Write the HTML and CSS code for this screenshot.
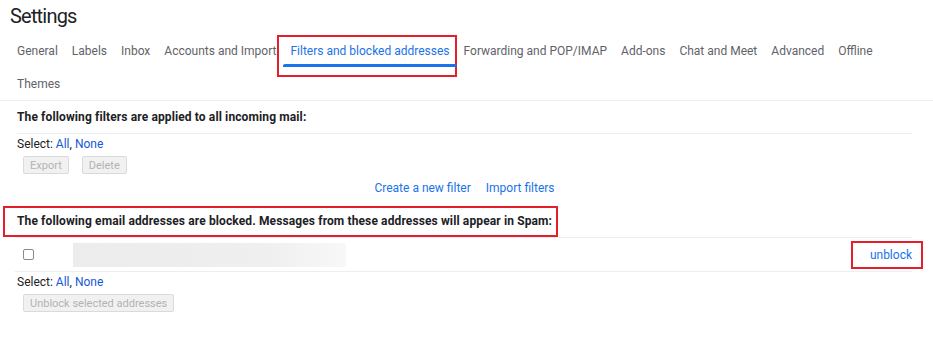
FILE: index.html
```html
<!DOCTYPE html>
<html>
<head>
<meta charset="utf-8">
<link rel="stylesheet" href="styles.css">
</head>
<body>
<div class="title">Settings</div>
<nav class="tabs">
  <span class="tab">General</span>
  <span class="tab">Labels</span>
  <span class="tab">Inbox</span>
  <span class="tab">Accounts and Import</span>
  <span class="tab active">Filters and blocked addresses<span class="mark"></span></span>
  <span class="tab">Forwarding and POP/IMAP</span>
  <span class="tab">Add-ons</span>
  <span class="tab">Chat and Meet</span>
  <span class="tab">Advanced</span>
  <span class="tab">Offline</span>
  <span class="tab">Themes</span>
</nav>
<div class="divider"></div>
<section class="filters">
  <div class="heading rule">The following filters are applied to all incoming mail:</div>
  <div class="select">Select: <a class="link">All</a>, <a class="link">None</a></div>
  <div class="buttons">
    <button class="btn">Export</button>
    <button class="btn">Delete</button>
  </div>
  <div class="actions">
    <a class="link2">Create a new filter</a>
    <a class="link2">Import filters</a>
  </div>
</section>
<div class="heading boxed">The following email addresses are blocked. Messages from these addresses will appear in Spam:</div>
<div class="blocked">
  <div class="row">
    <span class="check"></span>
    <span class="addr"></span>
    <span class="unblock"><a class="link2">unblock</a></span>
  </div>
</div>
<section class="filters">
  <div class="select">Select: <a class="link">All</a>, <a class="link">None</a></div>
  <div class="buttons">
    <button class="btn">Unblock selected addresses</button>
  </div>
</section>
</body>
</html>
```
FILE: styles.css
```css
* { box-sizing: border-box; }
body {
  margin: 0;
  background: #fff;
  font-family: Roboto, "Liberation Sans", Arial, sans-serif;
  color: #202124;
  font-size: 12px;
}
.title {
  height: 34px;
  line-height: 32px;
  font-size: 20px;
  padding-left: 10px;
  letter-spacing: -0.8px;
  color: #202124;
}
.tabs {
  display: flex;
  flex-wrap: wrap;
  padding-left: 10px;
  max-width: 900px;
}
.tab {
  position: relative;
  height: 33px;
  line-height: 31px;
  padding: 2px 7px 0;
  font-size: 12px;
  color: #5f6368;
}
.tab.active { color: #1a73e8; }
.tab.active::after {
  content: "";
  position: absolute;
  left: 0;
  right: 0;
  bottom: 0;
  height: 3px;
  background: #1a73e8;
  border-radius: 2px 2px 0 0;
}
.mark {
  position: absolute;
  left: -6px;
  right: 0;
  top: 1px;
  bottom: -10px;
  border: 2px solid #e41e2b;
}
.divider {
  height: 1px;
  background: #eceff1;
}
.filters {
  padding: 0 21px 0 17px;
}
.heading {
  font-weight: bold;
  color: #202124;
  letter-spacing: 0.12px;
}
.rule {
  height: 33px;
  line-height: 32px;
  border-bottom: 1px solid #eceff1;
}
.select {
  height: 20px;
  line-height: 20px;
  color: #202124;
}
.link { color: #1558d6; }
.link2 { color: #1a73e8; }
.buttons {
  display: flex;
  gap: 13px;
  margin-top: 2px;
  padding-left: 6px;
}
.btn {
  height: 18px;
  padding: 0 6px;
  font-family: inherit;
  font-size: 11px;
  color: #b3b3b3;
  background: #f1f1f1;
  border: 1px solid #dadada;
  border-radius: 2px;
}
.actions {
  display: flex;
  justify-content: center;
  gap: 15px;
  margin-top: 4px;
  height: 20px;
  line-height: 20px;
}
.boxed {
  display: inline-block;
  margin: 8px 0 0 3px;
  height: 31px;
  line-height: 27px;
  padding: 0 4px 0 12px;
  border: 2px solid #e41e2b;
}
.blocked {
  margin: 0 21px 0 15px;
  border-top: 1px solid #eceff1;
  border-bottom: 1px solid #eceff1;
}
.row {
  display: flex;
  align-items: center;
  height: 33px;
}
.check {
  width: 11px;
  height: 11px;
  margin-left: 8px;
  border: 1.5px solid #8a8a8a;
  border-radius: 2px;
}
.addr {
  width: 273px;
  height: 24px;
  margin-left: 39px;
  background: linear-gradient(90deg, #ececec 0%, #efefef 70%, #f8f8f8 100%);
}
.unblock {
  margin-left: auto;
  margin-right: -11px;
  height: 28px;
  line-height: 24px;
  padding: 0 9px 0 17px;
  border: 2px solid #e41e2b;
}
```
